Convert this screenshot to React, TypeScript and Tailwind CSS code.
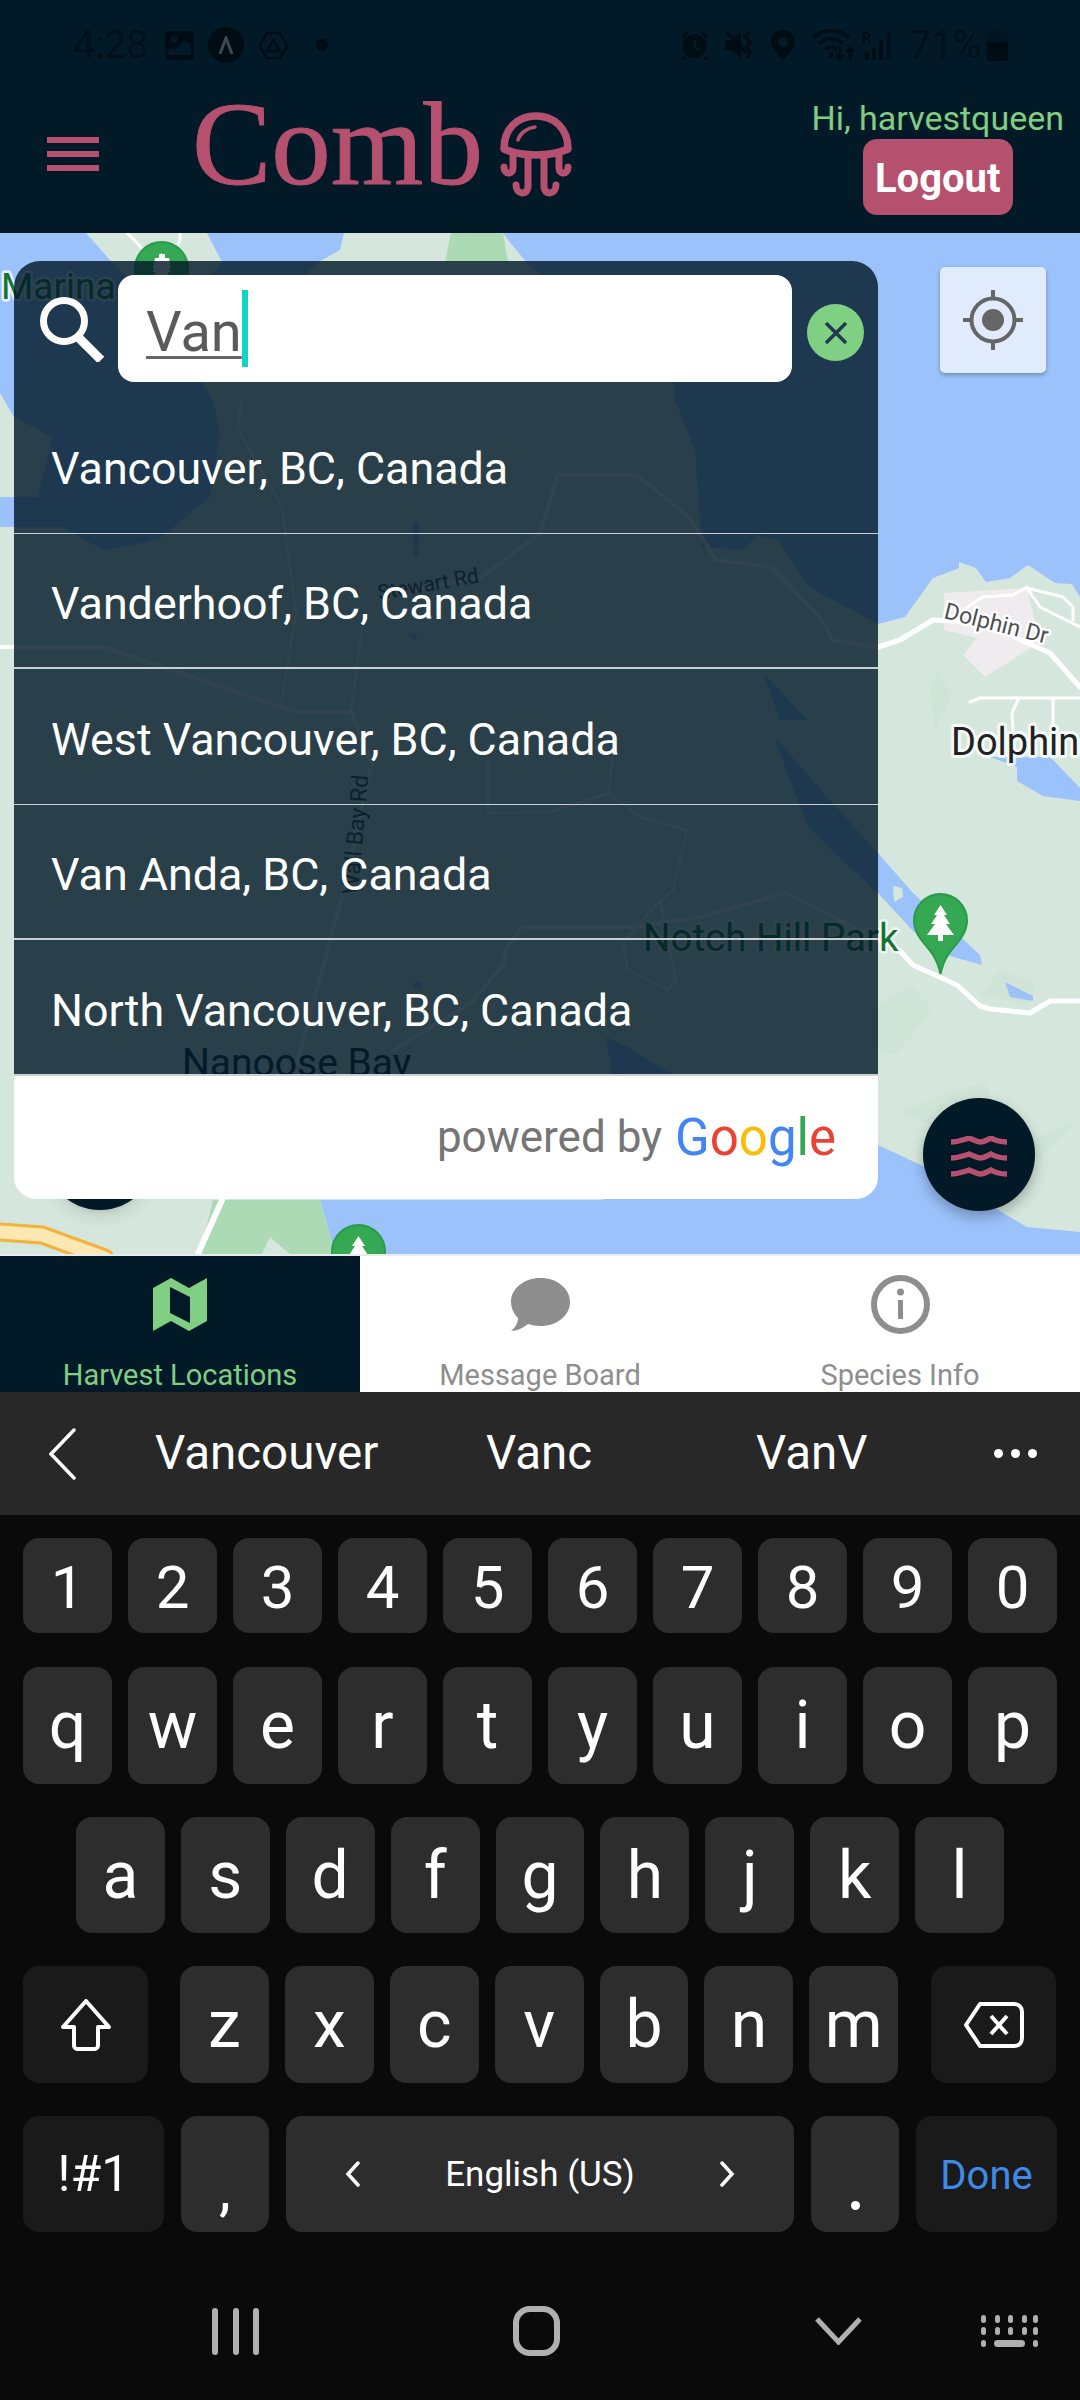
const PINK = '#b5506f';

const SUGGESTIONS = [
  { label: 'Vancouver, BC, Canada', line: 'border-b' },
  { label: 'Vanderhoof, BC, Canada', line: 'border-b-2' },
  { label: 'West Vancouver, BC, Canada', line: 'border-b' },
  { label: 'Van Anda, BC, Canada', line: 'border-b-2' },
  { label: 'North Vancouver, BC, Canada', line: 'border-b-2' },
];

function Key({ label, wide, digit }: { label: string; wide?: boolean; digit?: boolean }) {
  return (
    <div
      className={`${wide ? 'w-[88.9px]' : 'flex-1'} ${digit ? 'text-[60px] pt-[5px]' : 'text-[66px] pt-[1px]'} h-full rounded-[16px] bg-[#2d2d2d] flex items-center justify-center text-white leading-none`}
    >
      {label}
    </div>
  );
}

function Tree({ x, y }: { x: number; y: number }) {
  return (
    <g transform={`translate(${x} ${y})`}>
      <path
        d="M27.5 1C42 1 54 13 54 27.5C54 42 43 50 35 62C31 68 29 74 27.5 81C26 74 24 68 20 62C12 50 1 42 1 27.5C1 13 13 1 27.5 1Z"
        fill="#34a853"
        stroke="#2b9a4a"
        strokeWidth="2"
      />
      <path d="M27.5 12L34 22H31L37 31H33L41 42H30V48H25V42H14L22 31H18L24 22H21Z" fill="#fff" />
    </g>
  );
}

function MapLayer() {
  return (
    <svg className="absolute inset-0" width="1080" height="1021" viewBox="0 233 1080 1021">
      <rect x="0" y="233" width="1080" height="1021" fill="#9cc2fc" />
      {/* land */}
      <path
        d="M0 1254V527L62 527L103 550L158 540L210 497L220 433L213 400L202 383L317 263L340 250L344 233H503L508 240L527 263L673 383L675 400L695 450L702 547L744 550L757 535L778 540L809 587L878 624L905 617L933 578L959 568V562L976 568L986 582L1010 578L1028 565L1055 583L1072 584L1080 597V1232L1027 1227L923 1166L878 1145L600 1200H320L327 1225L335 1254Z"
        fill="#d5e7dc"
      />
      <path d="M0 393L14 417L52 437L38 497H0Z" fill="#d5e7dc" />
      <path d="M86 233H207L222 262L190 300L140 290L110 260Z" fill="#d5e7dc" />
      {/* parks */}
      <path d="M451 233H503L508 262H445Z" fill="#acdab5" />
      <path d="M213 1200H320L327 1225L335 1254H200Z" fill="#acdab5" />
      <path d="M262 1254L270 1237L290 1254Z" fill="#d5e7dc" />
      {/* forest tint */}
      <path d="M878 1005L912 985L932 1010L896 1055L878 1050Z" fill="#cfe4d6" />
      <path d="M980 995L1000 970L1036 983L1030 1005Z" fill="#cfe4d6" />
      <path d="M900 1112L950 1092L985 1082L1000 1117L1040 1137L1080 1117L1040 1157L950 1132Z" fill="#cfe4d6" />
      <path d="M930 690L938 668L952 695L935 730Z" fill="#cfe4d6" />
      {/* pink site */}
      <path d="M944 593L1027 588L1040 642L985 677L963 655L977 638L944 630Z" fill="#efebef" />
      {/* lakes and inlets */}
      <path d="M990 757L1017 767L1017 781L1043 796L1080 801V788L1060 767L1050 757Z" fill="#9cc2fc" />
      <path d="M763 673L808 720H780Z" fill="#9cc2fc" />
      <path d="M775 740L808 827L842 860L878 893L913 931L950 956L982 965L980 955L913 893L878 853L825 795L782 745Z" fill="#9cc2fc" />
      <path d="M893 886L902 888L903 897L894 902Z" fill="#d5e7dc" />
      <path d="M1005 982L1033 996V1001L1010 997Z" fill="#9cc2fc" />
      <path d="M606 1037L628 1047L673 1075H612Z" fill="#9cc2fc" />
      <circle cx="418" cy="985" r="4" fill="#9cc2fc" />
      <path d="M413 523L419 523L418 557L414 557Z" fill="#9cc2fc" />
      <path d="M406 633L418 635L414 640Z" fill="#9cc2fc" />
      {/* roads */}
      <g fill="none" stroke="#fff" strokeLinejoin="round" strokeLinecap="round">
        <path d="M878 647L900 640L933 620L970 622L1010 635L1050 653L1080 687" strokeWidth="5" />
        <path d="M900 951L913 965L957 985L980 1006L990 1009L1030 1013L1050 1001H1080" strokeWidth="5" />
        <g strokeWidth="4">
          <path d="M878 648L833 640L820 617L771 567L716 560L689 517L637 475L558 475L540 533L482 577L413 590" />
          <path d="M0 647H103L296 712H351L372 763L342 897L297 1063" />
          <path d="M393 1050L471 1003L505 963V950L522 927H634L701 917L786 893L860 930L900 951" />
        </g>
        <g strokeWidth="2.500">
          <path d="M241 400L238 430L282 507L296 613L282 700" />
          <path d="M362 627L351 712" />
          <path d="M488 757V813L550 812L609 793L612 757" />
          <path d="M609 793L640 817L687 830L673 890L654 907L623 943L628 970L668 990L676 980L660 900" />
          <path d="M970 702L980 698H1080" strokeWidth="3" />
          <path d="M1018 700L1012 713L1013 730" strokeWidth="3" />
          <path d="M1053 700V727" strokeWidth="3" />
          <path d="M1027 588L1040 607L1080 627" strokeWidth="3" />
          <path d="M1027 588L1063 597L1073 607V620" strokeWidth="3" />
          <path d="M963 610L983 597L1013 595L1027 587" strokeWidth="3" />
          <path d="M127 233C135 240 145 250 150 262M180 233C181 245 176 250 170 254" strokeWidth="3" />
          <path d="M222 1200L198 1254" strokeWidth="6" />
        </g>
        <path d="M0 1232L42 1235L105 1258" stroke="#f4b23c" strokeWidth="19" />
        <path d="M0 1232L42 1235L105 1258" stroke="#fde8b4" strokeWidth="13" />
      </g>
      <Tree x={134} y={241} />
      <path d="M153 268L155 258H159V254H165V258H169L171 268L162 272Z" fill="#fff" />
      <Tree x={913} y={893} />
      <Tree x={331} y={1224} />
      {/* labels */}
      <g className="font-['Roboto',sans-serif]" paintOrder="stroke" strokeLinejoin="round">
        <text x="1" y="299" fontSize="37" fill="#137333" stroke="#ffffff" strokeOpacity="0.8" strokeWidth="5">
          Marina
        </text>
        <text x="643" y="951" fontSize="38.500" fill="#137333" stroke="#ffffff" strokeOpacity="0.7" strokeWidth="5">
          Notch Hill Park
        </text>
        <text x="182" y="1076" fontSize="39" fill="#12202c">
          Nanoose Bay
        </text>
        <text x="951" y="755" fontSize="38" fill="#202124" stroke="#ffffff" strokeOpacity="0.8" strokeWidth="6">
          Dolphin
        </text>
        <text transform="translate(943 618) rotate(14)" fontSize="23" fill="#4d4f53" stroke="#ffffff" strokeWidth="5">
          Dolphin Dr
        </text>
        <text transform="translate(379 600) rotate(-10)" fontSize="21" fill="#3f4145">
          Stewart Rd
        </text>
        <text transform="translate(358 895) rotate(-85)" fontSize="23" fill="#3f4145">
          Wall Bay Rd
        </text>
      </g>
    </svg>
  );
}

function SearchPanel() {
  return (
    <div className="absolute left-[14px] top-[28px] w-[864px] h-[938px] rounded-t-[26px] rounded-b-[22px] overflow-hidden flex flex-col">
      <div className="h-[137px] flex-none flex items-start bg-[#021a28]/[0.82] pl-[25px]">
        <svg className="mt-[35px] flex-none" width="66" height="66" viewBox="0 0 66 66" fill="none" stroke="#fff">
          <circle cx="25" cy="25" r="20.5" strokeWidth="7" />
          <path d="M39 41L62 64" strokeWidth="9" />
        </svg>
        <div className="ml-[13px] mt-[14px] w-[674px] h-[107px] rounded-[16px] bg-white flex items-center pl-[28px]">
          <span className="mt-[7px] text-[56px] leading-none text-[#5a5a5a] underline decoration-[3px] underline-offset-[5px] decoration-[#666666]">
            Van
          </span>
          <span className="w-[6px] h-[77px] bg-[#12d4c0]" />
        </div>
        <div className="ml-[15px] mt-[43px] w-[57px] h-[57px] rounded-full bg-[#7fd083] flex items-center justify-center">
          <svg width="26" height="26" viewBox="0 0 26 26" stroke="#1f3a50" strokeWidth="3.500">
            <path d="M3 3L23 23M23 3L3 23" />
          </svg>
        </div>
      </div>
      {SUGGESTIONS.map((s) => (
        <div
          key={s.label}
          className={`h-[135.6px] flex-none flex items-center pl-[37px] pt-[8px] bg-[#021a28]/[0.82] text-white text-[44.800px] leading-none border-[#c9cfd3] ${s.line}`}
        >
          {s.label}
        </div>
      ))}
      <div className="flex-1 bg-white flex items-center justify-end gap-[13px] pr-[42px]">
        <span className="text-[44px] leading-none text-[#757575]">powered by</span>
        <span className="text-[51px] leading-none">
          <span className="text-[#4285f4]">G</span>
          <span className="text-[#ea4335]">o</span>
          <span className="text-[#fbbc05]">o</span>
          <span className="text-[#4285f4]">g</span>
          <span className="text-[#34a853]">l</span>
          <span className="text-[#ea4335]">e</span>
        </span>
      </div>
    </div>
  );
}

function StatusBar() {
  return (
    <div className="h-[90px] flex-none flex items-center pl-[73px] text-[#00101a] text-[39px] leading-none">
      <span className="w-[92px]">4:28</span>
      <svg width="29" height="29" viewBox="0 0 29 29">
        <path
          fillRule="evenodd"
          d="M5 0H24C27 0 29 2 29 5V24C29 27 27 29 24 29H5C2 29 0 27 0 24V5C0 2 2 0 5 0ZM9 5A3.500 3.500 0 1 0 9 12A3.500 3.500 0 1 0 9 5ZM3 24H26V13L19 9L10 19L7 16L3 19Z"
          fill="#000c14"
        />
      </svg>
      <div className="ml-[14px] w-[36px] h-[36px] rounded-full bg-[#000c14] flex items-center justify-center">
        <svg width="16" height="18" viewBox="0 0 16 18" fill="none" stroke="#3a4a54" strokeWidth="3">
          <path d="M2 18L8 2L14 18" />
        </svg>
      </div>
      <svg className="ml-[14px]" width="31" height="29" viewBox="0 0 31 29" fill="none" stroke="#000c14" strokeWidth="2.500">
        <path d="M9 2H22L29.500 15L22 27H9L1.500 15Z" />
        <path d="M15.500 9L22 20H9Z" />
      </svg>
      <div className="ml-[27px] w-[12px] h-[12px] rounded-full bg-[#000c14]" />
      <svg className="ml-[352px]" width="29" height="30" viewBox="0 0 29 30" fill="#000c14">
        <path
          fillRule="evenodd"
          d="M14.500 4A12 12 0 1 1 14.500 28A12 12 0 1 1 14.500 4ZM13 10V18L20 21L21 19L16 16.500V10Z"
        />
        <path d="M1 6L7 1L9 3L3 8ZM28 6L22 1L20 3L26 8ZM3 26L6 28L4 30L1 29ZM26 26L23 28L25 30L28 29Z" />
      </svg>
      <svg className="ml-[16px]" width="29" height="30" viewBox="0 0 29 30" fill="none" stroke="#000c14">
        <path d="M0 10H6L16 2V28L6 20H0Z" fill="#000c14" stroke="none" />
        <path d="M2 2L22 24" strokeWidth="3" />
        <path d="M24 2L20 7L26 12L21 17L26 22L22 28" strokeWidth="3" />
      </svg>
      <svg className="ml-[17px]" width="24" height="30" viewBox="0 0 24 30">
        <path
          fillRule="evenodd"
          d="M12 0C19 0 24 5 24 12C24 19 17 25 12 30C7 25 0 19 0 12C0 5 5 0 12 0ZM12 7A5 5 0 1 0 12 17A5 5 0 1 0 12 7Z"
          fill="#000c14"
        />
      </svg>
      <svg className="ml-[17px]" width="43" height="32" viewBox="0 0 43 32" fill="none" stroke="#000c14" strokeWidth="3.500">
        <path d="M1 9C11 -1 27 -1 37 9M7 15C14 8 24 8 31 15M13 21C17 17 21 17 25 21" />
        <circle cx="19" cy="26" r="2.500" fill="#000c14" stroke="none" />
        <path d="M28 17V30M24 26L28 30L32 26M38 31V19M34 23L38 19L42 23" strokeWidth="2.500" />
      </svg>
      <svg className="ml-[7px]" width="30" height="30" viewBox="0 0 30 30" fill="#000c14">
        <rect x="3" y="23" width="4" height="7" />
        <rect x="10" y="18" width="4" height="12" />
        <rect x="17" y="10" width="4" height="20" />
        <rect x="24" y="2" width="5" height="28" opacity="0.5" />
        <text x="0" y="13" fontSize="14" fontWeight="700" className="font-['Roboto',sans-serif]">
          R
        </text>
      </svg>
      <span className="ml-[17px] w-[78px]">71%</span>
      <svg width="21" height="31" viewBox="0 0 21 31" fill="#000c14">
        <path d="M7 0H14V3H18C20 3 21 4 21 6V12H0V6C0 4 1 3 3 3H7Z" opacity="0.35" />
        <path d="M0 12H21V28C21 30 20 31 18 31H3C1 31 0 30 0 28Z" />
      </svg>
    </div>
  );
}

function Header() {
  return (
    <div className="h-[233px] flex-none bg-[#021a28] flex flex-col">
      <StatusBar />
      <div className="flex-1 flex items-start pl-[47px] pr-[16px]">
        <div className="mt-[47px] w-[52px] flex flex-col gap-[8px]">
          <div className="h-[6px] bg-[#b5506f]" />
          <div className="h-[6px] bg-[#b5506f]" />
          <div className="h-[6px] bg-[#b5506f]" />
        </div>
        <div className="ml-[93px] -mt-[4px] font-['Liberation_Serif',serif] text-[119px] leading-[117px] text-[#b5506f] [-webkit-text-stroke:1px_#b5506f]">
          Comb
        </div>
        <svg className="ml-[17px] mt-[22px]" width="72" height="85" viewBox="0 0 72 85" fill="none" stroke={PINK} strokeLinecap="round">
          <path d="M4 37C4 16 18 4 36 4C54 4 68 16 68 37C50 45 22 45 4 37Z" strokeWidth="7.500" strokeLinejoin="round" />
          <path d="M18 28C20 21 27 16 35 15" strokeWidth="3.500" />
          <g strokeWidth="7">
            <path d="M13 44V56C13 63 4 63 4 55" />
            <path d="M28 47V74C28 84 16 83 16 73" />
            <path d="M44 47V74C44 84 56 83 56 73" />
            <path d="M59 44V56C59 63 68 63 68 55" />
          </g>
        </svg>
        <div className="ml-auto flex flex-col items-center">
          <div className="mt-[8px] text-[34px] leading-[41px] text-[#7fce82]">Hi, harvestqueen</div>
          <div className="w-[150px] h-[76px] rounded-[14px] bg-[#b5506f] flex items-center justify-center pt-[3px] text-white text-[40px] font-bold leading-none">
            Logout
          </div>
        </div>
      </div>
    </div>
  );
}

function MapArea() {
  return (
    <div className="relative h-[1021px] flex-none overflow-hidden">
      <MapLayer />
      {/* fab hidden behind the panel */}
      <div className="absolute left-[44px] top-[865px] w-[112px] h-[112px] rounded-full bg-[#021a28] shadow-lg" />
      <SearchPanel />
      <div className="absolute left-[940px] top-[34px] w-[106px] h-[106px] rounded-[5px] bg-[#e0ecfe] shadow-[0_2px_4px_rgba(0,0,0,0.3)] flex items-center justify-center">
        <svg width="60" height="60" viewBox="0 0 60 60" fill="none" stroke="#666666">
          <circle cx="30" cy="30" r="21.500" strokeWidth="4" />
          <circle cx="30" cy="30" r="11" fill="#666666" stroke="none" />
          <path d="M30 0V9M30 51V60M0 30H9M51 30H60" strokeWidth="4" />
        </svg>
      </div>
      <div className="absolute left-[923px] top-[865px] w-[112px] h-[113px] rounded-full bg-[#021a28] shadow-[0_6px_14px_rgba(0,0,0,0.28)] flex items-center justify-center">
        <svg className="mt-[6px]" width="56" height="43" viewBox="0 0 56 43" fill="none" stroke={PINK} strokeWidth="5.500">
          <path d="M0 6C8 6 12 4 18 2C23 4 27 6 29 6C33 6 36 4 40 2C45 5 50 6 56 6" />
          <path d="M0 22C8 22 12 20 18 18C23 20 27 22 29 22C33 22 36 20 40 18C45 21 50 22 56 22" />
          <path d="M0 38C8 38 12 36 18 34C23 36 27 38 29 38C33 38 36 36 40 34C45 37 50 38 56 38" />
        </svg>
      </div>
    </div>
  );
}

function TabBar() {
  return (
    <div className="h-[138px] flex-none flex border-t-2 border-[#e8eaed] bg-white text-[29px] leading-none text-[#8e8e8e]">
      <div className="w-[360px] bg-[#021a28] flex flex-col items-center pt-[22px] text-[#7fce82]">
        <svg width="54" height="53" viewBox="0 0 54 53">
          <path
            fillRule="evenodd"
            d="M0 10L18 0L36 10L54 0V43L36 53L18 43L0 53ZM17 9V35L37 45V19Z"
            fill="#7fce82"
          />
        </svg>
        <span className="mt-[30px]">Harvest Locations</span>
      </div>
      <div className="w-[360px] flex flex-col items-center pt-[22px]">
        <svg width="59" height="53" viewBox="0 0 59 53">
          <path d="M29.500 0C46 0 59 10.500 59 24C59 37.500 46 48 29.500 48C25 48 21 47 17 46C12 50 6 53 0 53C4 50 7 45 7 40C3 36 0 30 0 24C0 10.500 13 0 29.500 0Z" fill="#8e8e8e" />
        </svg>
        <span className="mt-[30px]">Message Board</span>
      </div>
      <div className="w-[360px] flex flex-col items-center pt-[19px]">
        <svg width="59" height="59" viewBox="0 0 59 59" fill="#8e8e8e">
          <circle cx="29.500" cy="29.500" r="26.500" fill="none" stroke="#8e8e8e" strokeWidth="6" />
          <circle cx="29.500" cy="17" r="3.500" />
          <rect x="27" y="25" width="5" height="19" />
        </svg>
        <span className="mt-[27px]">Species Info</span>
      </div>
    </div>
  );
}

function Keyboard() {
  return (
    <div className="flex-1 bg-[#0a0a0a] flex flex-col">
      <div className="h-[123px] flex-none bg-[#282828] flex items-center pl-[49px] text-white text-[47.500px] leading-none">
        <svg className="flex-none" width="27" height="52" viewBox="0 0 27 52" fill="none" stroke="#fff" strokeWidth="3.500" strokeLinecap="round">
          <path d="M25 2L2 26L25 50" />
        </svg>
        <span className="ml-[79px] w-[331px]">Vancouver</span>
        <span className="w-[270px]">Vanc</span>
        <span className="w-[238px]">VanV</span>
        <div className="flex gap-[8px]">
          <div className="w-[9px] h-[9px] rounded-full bg-white" />
          <div className="w-[9px] h-[9px] rounded-full bg-white" />
          <div className="w-[9px] h-[9px] rounded-full bg-white" />
        </div>
      </div>
      <div className="px-[23px] pt-[23px] flex flex-col gap-[33px]">
        <div className="h-[95px] mb-[1px] flex gap-[16px]">
          {'1234567890'.split('').map((k) => (
            <Key key={k} label={k} digit />
          ))}
        </div>
        <div className="h-[117px] flex gap-[16px]">
          {'qwertyuiop'.split('').map((k) => (
            <Key key={k} label={k} />
          ))}
        </div>
        <div className="h-[116px] px-[53px] flex gap-[16px]">
          {'asdfghjkl'.split('').map((k) => (
            <Key key={k} label={k} />
          ))}
        </div>
        <div className="h-[117px] flex gap-[16px]">
          <div className="w-[125px] mr-[16px] rounded-[16px] bg-[#1a1a1a] flex items-center justify-center">
            <svg width="50" height="52" viewBox="0 0 50 52" fill="none" stroke="#fff" strokeWidth="4" strokeLinejoin="round">
              <path d="M25 2L48 28H37V46C37 48 36 50 34 50H16C14 50 13 48 13 46V28H2Z" />
            </svg>
          </div>
          {'zxcvbnm'.split('').map((k) => (
            <Key key={k} label={k} wide />
          ))}
          <div className="w-[125px] ml-[17px] rounded-[16px] bg-[#1a1a1a] flex items-center justify-center">
            <svg width="60" height="46" viewBox="0 0 60 46" fill="none" stroke="#fff" strokeWidth="4" strokeLinejoin="round">
              <path d="M16 2H50C55 2 58 5 58 10V36C58 41 55 44 50 44H16L2 23Z" />
              <path d="M27 14L43 32M43 14L27 32" />
            </svg>
          </div>
        </div>
        <div className="h-[116px] flex gap-[17px]">
          <div className="w-[141px] rounded-[16px] bg-[#1a1a1a] flex items-center justify-center text-white text-[50px] leading-none">
            !#1
          </div>
          <div className="w-[88px] rounded-[16px] bg-[#2d2d2d] flex items-end justify-center pb-[23px] text-white text-[60px] leading-[40px]">
            ,
          </div>
          <div className="flex-1 rounded-[16px] bg-[#2d2d2d] flex items-center justify-center gap-[84px] text-white text-[35px] leading-none">
            <svg width="16" height="26" viewBox="0 0 16 26" fill="none" stroke="#fff" strokeWidth="3.500" strokeLinecap="round">
              <path d="M13 2L3 13L13 24" />
            </svg>
            <span>English (US)</span>
            <svg width="16" height="26" viewBox="0 0 16 26" fill="none" stroke="#fff" strokeWidth="3.500" strokeLinecap="round">
              <path d="M3 2L13 13L3 24" />
            </svg>
          </div>
          <div className="w-[88px] rounded-[16px] bg-[#2d2d2d] flex items-end justify-center pb-[22px]">
            <div className="w-[9px] h-[9px] rounded-full bg-white" />
          </div>
          <div className="w-[141px] rounded-[16px] bg-[#1a1a1a] flex items-center justify-center pt-[3px] text-[#3f8ae8] text-[40px] leading-none">
            Done
          </div>
        </div>
      </div>
      <div className="mt-[74px] h-[50px] flex items-center">
        <div className="ml-[212px] w-[47px] flex justify-between">
          <div className="w-[6px] h-[47px] rounded-[3px] bg-[#b0b0b0]" />
          <div className="w-[6px] h-[47px] rounded-[3px] bg-[#b0b0b0]" />
          <div className="w-[6px] h-[47px] rounded-[3px] bg-[#b0b0b0]" />
        </div>
        <div className="ml-[254px] w-[47px] h-[50px] rounded-[17px] border-[6px] border-[#b0b0b0]" />
        <svg className="ml-[255px]" width="47" height="28" viewBox="0 0 47 28" fill="none" stroke="#b0b0b0" strokeWidth="5">
          <path d="M2 2L23.500 25L45 2" />
        </svg>
        <svg className="ml-[119px]" width="57" height="32" viewBox="0 0 57 32" fill="#b0b0b0">
          {[0, 14, 27, 41, 52].map((x) => (
            <rect key={`a${x}`} x={x} y="0" width="5" height="8" rx="2.500" />
          ))}
          {[0, 14, 27, 41, 52].map((x) => (
            <rect key={`b${x}`} x={x} y="12" width="5" height="8" rx="2.500" />
          ))}
          <rect x="0" y="25" width="5" height="7" rx="2.500" />
          <rect x="13" y="25" width="31" height="7" rx="3.500" />
          <rect x="52" y="25" width="5" height="7" rx="2.500" />
        </svg>
      </div>
    </div>
  );
}

export default function App() {
  return (
    <div className="w-[1080px] h-[2400px] flex flex-col overflow-hidden font-['Roboto',sans-serif]">
      <Header />
      <MapArea />
      <TabBar />
      <Keyboard />
    </div>
  );
}
